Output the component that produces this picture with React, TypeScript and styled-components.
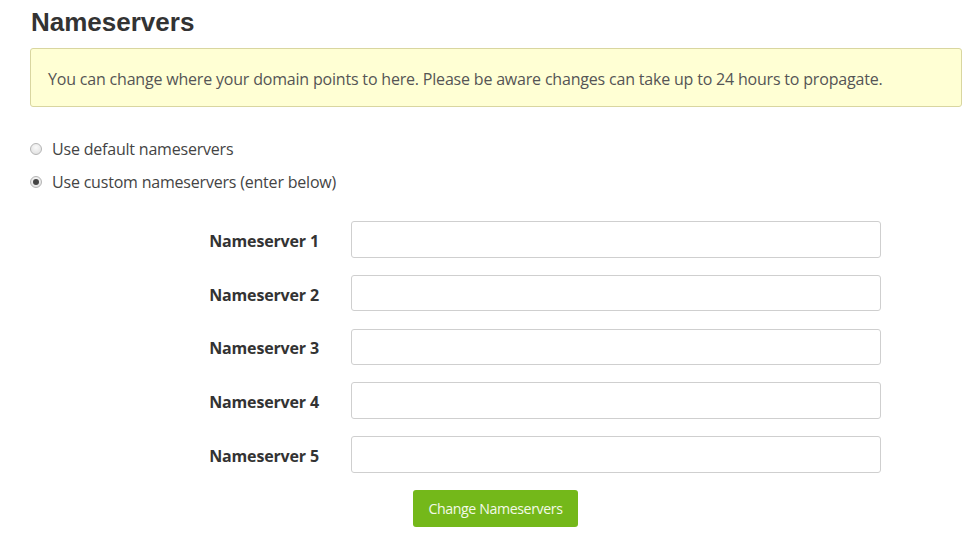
import React from "react";
import styled, { createGlobalStyle } from "styled-components";

const Global = createGlobalStyle`
  html, body { margin: 0; padding: 0; background: #fff; }
  body { font-family: "Open Sans", "Liberation Sans", sans-serif; color: #444; }
  * { box-sizing: border-box; }
`;

const Page = styled.div`
  width: 979px;
  padding: 7px 17px 0 30px;
`;

const Title = styled.h1`
  margin: 0 0 11px 1px;
  font-family: "Liberation Sans", Arial, sans-serif;
  font-weight: bold;
  font-size: 26px;
  line-height: 30px;
  color: #333;
`;

const Notice = styled.div`
  height: 59px;
  display: flex;
  align-items: center;
  padding: 2px 0 0 17px;
  background: #ffffd4;
  border: 1px solid #d9d6a0;
  border-radius: 3px;
  font-size: 16px;
  color: #555;
  letter-spacing: -0.19px;
`;

const Options = styled.div`
  display: flex;
  flex-direction: column;
  gap: 11px;
  margin-top: 31px;
`;

const Option = styled.label`
  display: flex;
  align-items: center;
  gap: 10px;
  height: 22px;
  font-size: 16px;
  letter-spacing: -0.2px;
  color: #444;
  cursor: pointer;
`;

const Radio = styled.input.attrs({ type: "radio" })`
  appearance: none;
  margin: 0;
  width: 12px;
  height: 12px;
  border-radius: 50%;
  border: 1px solid #b5b5b5;
  background: radial-gradient(circle at 50% 35%, #fafafa 0%, #dcdcdc 100%);
  display: grid;
  place-items: center;
  &:checked::after {
    content: "";
    width: 6px;
    height: 6px;
    border-radius: 50%;
    background: #444;
  }
`;

const Fields = styled.div`
  display: flex;
  flex-direction: column;
  gap: 17.25px;
  margin-top: 28px;
`;

const Row = styled.div`
  display: grid;
  grid-template-columns: 289px 530px;
  column-gap: 32px;
  align-items: center;
`;

const FieldLabel = styled.label`
  justify-self: end;
  padding-top: 3px;
  font-weight: 700;
  font-size: 16px;
  letter-spacing: -0.15px;
  color: #333;
`;

const Input = styled.input`
  height: 36.5px;
  width: 530px;
  border: 1px solid #cfcfcf;
  border-radius: 3px;
  background: #fff;
  padding: 0 10px;
  font-size: 15px;
  font-family: inherit;
  outline: none;
`;

const ButtonRow = styled.div`
  padding: 17px 0 0 383px;
`;

const Button = styled.button`
  width: 165px;
  height: 37px;
  border: none;
  border-radius: 3px;
  background: #74b81a;
  color: #f3f9e8;
  font-family: "Open Sans", sans-serif;
  font-size: 14.2px;
  letter-spacing: -0.4px;
  cursor: pointer;
`;

export default function App() {
  const [mode, setMode] = React.useState("custom");
  return (
    <Page>
      <Global />
      <Title>Nameservers</Title>
      <Notice>
        You can change where your domain points to here. Please be aware changes can take up to 24 hours to propagate.
      </Notice>
      <Options>
        <Option>
          <Radio name="ns" checked={mode === "default"} onChange={() => setMode("default")} />
          Use default nameservers
        </Option>
        <Option>
          <Radio name="ns" checked={mode === "custom"} onChange={() => setMode("custom")} />
          Use custom nameservers (enter below)
        </Option>
      </Options>
      <Fields>
        {[1, 2, 3, 4, 5].map((n) => (
          <Row key={n}>
            <FieldLabel htmlFor={`ns${n}`}>Nameserver {n}</FieldLabel>
            <Input id={`ns${n}`} />
          </Row>
        ))}
      </Fields>
      <ButtonRow>
        <Button>Change Nameservers</Button>
      </ButtonRow>
    </Page>
  );
}
